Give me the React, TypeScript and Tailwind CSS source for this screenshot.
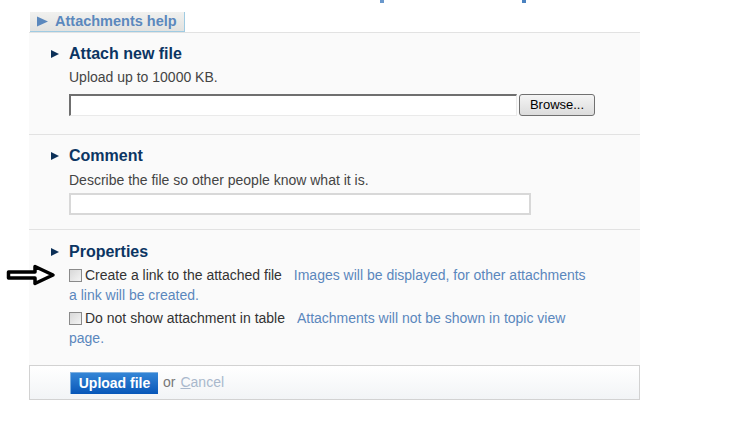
import React from "react";

const font = "font-['Liberation_Sans',Arial,sans-serif]";

const Triangle = () => (
  <svg width="8" height="8" viewBox="0 0 8 8" className="shrink-0">
    <path d="M0 0 L8 4 L0 8 Z" fill="#0b2f57" />
  </svg>
);

const Heading = ({ children }: { children: React.ReactNode }) => (
  <div className="flex items-center h-[20px] ml-[-18px]">
    <div className="w-[18px] flex items-center">
      <Triangle />
    </div>
    <span className="text-[16px] font-bold text-[#0b3563] leading-[20px]">{children}</span>
  </div>
);

const Checkbox = () => (
  <span className="inline-block align-[-2px] w-[13px] h-[13px] border border-[#8a8a8a] bg-gradient-to-br from-[#d8d8d8] to-[#f4f4f4] mr-[3px]" />
);

const Arrow = () => (
  <svg width="50" height="22" viewBox="0 0 50 22">
    <path
      d="M2.5 8 L29 8 L29 2.5 L47 11 L29 19.5 L29 14 L2.5 14 Z"
      fill="#fff"
      stroke="#000"
      strokeWidth="3.5"
      strokeLinejoin="round"
    />
  </svg>
);

export default function App() {
  return (
    <div className={`${font} bg-white w-[731px] h-[426px] overflow-hidden text-[14px]`}>
      {/* clipped title descenders */}
      <div className="flex h-[3px]">
        <span className="ml-[380px] w-[4px] h-[3px] bg-[#6a98cc]" />
        <span className="ml-[138px] w-[4px] h-[3px] bg-[#4a82c0]" />
      </div>

      <div className="ml-[29px] w-[611px] mt-[9px]">
        {/* tab */}
        <div className="flex">
          <div className="ml-[1px] h-[20px] w-[155px] flex items-center pl-[7px] bg-gradient-to-b from-[#f1f1ef] to-[#e2e2e0] border-r border-b border-[#9fcbe2]">
            <svg width="11" height="11" viewBox="0 0 11 11" className="mr-[7px]">
              <path d="M0 0.5 L11 5.5 L0 10.5 Z" fill="#5b88bd" />
            </svg>
            <span className="text-[14.5px] font-bold text-[#5b88bd] leading-none">Attachments help</span>
          </div>
        </div>

        <div className="bg-[#fafafa] border-t border-[#e2e2e2]">
          {/* attach new file */}
          <div className="pl-[40px] pt-[11px] pb-[18px] border-b border-[#e2e2e2]">
            <Heading>Attach new file</Heading>
            <div className="text-[#444] leading-[18px] mt-[4px]">Upload up to 10000 KB.</div>
            <div className="flex items-center mt-[8px]">
              <div className="w-[448px] h-[22px] bg-white border-t-2 border-l-2 border-[#6f6f6f] border-r border-b border-r-[#eaeaea] border-b-[#eaeaea]" />
              <div className="ml-[2px] w-[76px] h-[22px] rounded-[3px] border border-[#707070] bg-gradient-to-b from-[#f4f4f4] to-[#dcdcdc] flex items-center justify-center text-[13px] text-black">
                Browse...
              </div>
            </div>
          </div>

          {/* comment */}
          <div className="pl-[40px] pt-[11px] pb-[14px] border-b border-[#e2e2e2]">
            <Heading>Comment</Heading>
            <div className="text-[#444] leading-[18px] mt-[5px]">Describe the file so other people know what it is.</div>
            <div className="w-[462px] h-[22px] mt-[4px] bg-white border-2 border-[#d8d8d8]" />
          </div>

          {/* properties */}
          <div className="pl-[40px] pt-[12px] pb-[17px]">
            <Heading>Properties</Heading>
            <div className="relative w-[522px] text-[#333] leading-[20px] mt-[3px]">
              <div className="absolute left-[-63px] top-[-1px]">
                <Arrow />
              </div>
              <Checkbox />
              Create a link to the attached file{" "}
              <span className="text-[#5a87bd] ml-[8px]">Images will be displayed, for other attachments a link will be created.</span>
            </div>
            <div className="w-[522px] text-[#333] leading-[20px] mt-[3px]">
              <Checkbox />
              Do not show attachment in table{" "}
              <span className="text-[#5a87bd] ml-[8px]">Attachments will not be shown in topic view page.</span>
            </div>
          </div>
        </div>

        {/* footer */}
        <div className="h-[35px] border border-[#d2d2d2] bg-gradient-to-b from-white to-[#f2f4f6] flex items-center pl-[40px]">
          <div className="h-[22px] w-[88px] flex items-center justify-center bg-gradient-to-b from-[#3385d6] to-[#0656b8] border-t border-l border-[#7fb0e0] text-white font-bold text-[14px]">
            Upload file
          </div>
          <span className="ml-[5px] text-[#777]">or</span>
          <span className="ml-[5px] text-[#a9b8cc]">
            <span className="underline">C</span>ancel
          </span>
        </div>
      </div>
    </div>
  );
}
